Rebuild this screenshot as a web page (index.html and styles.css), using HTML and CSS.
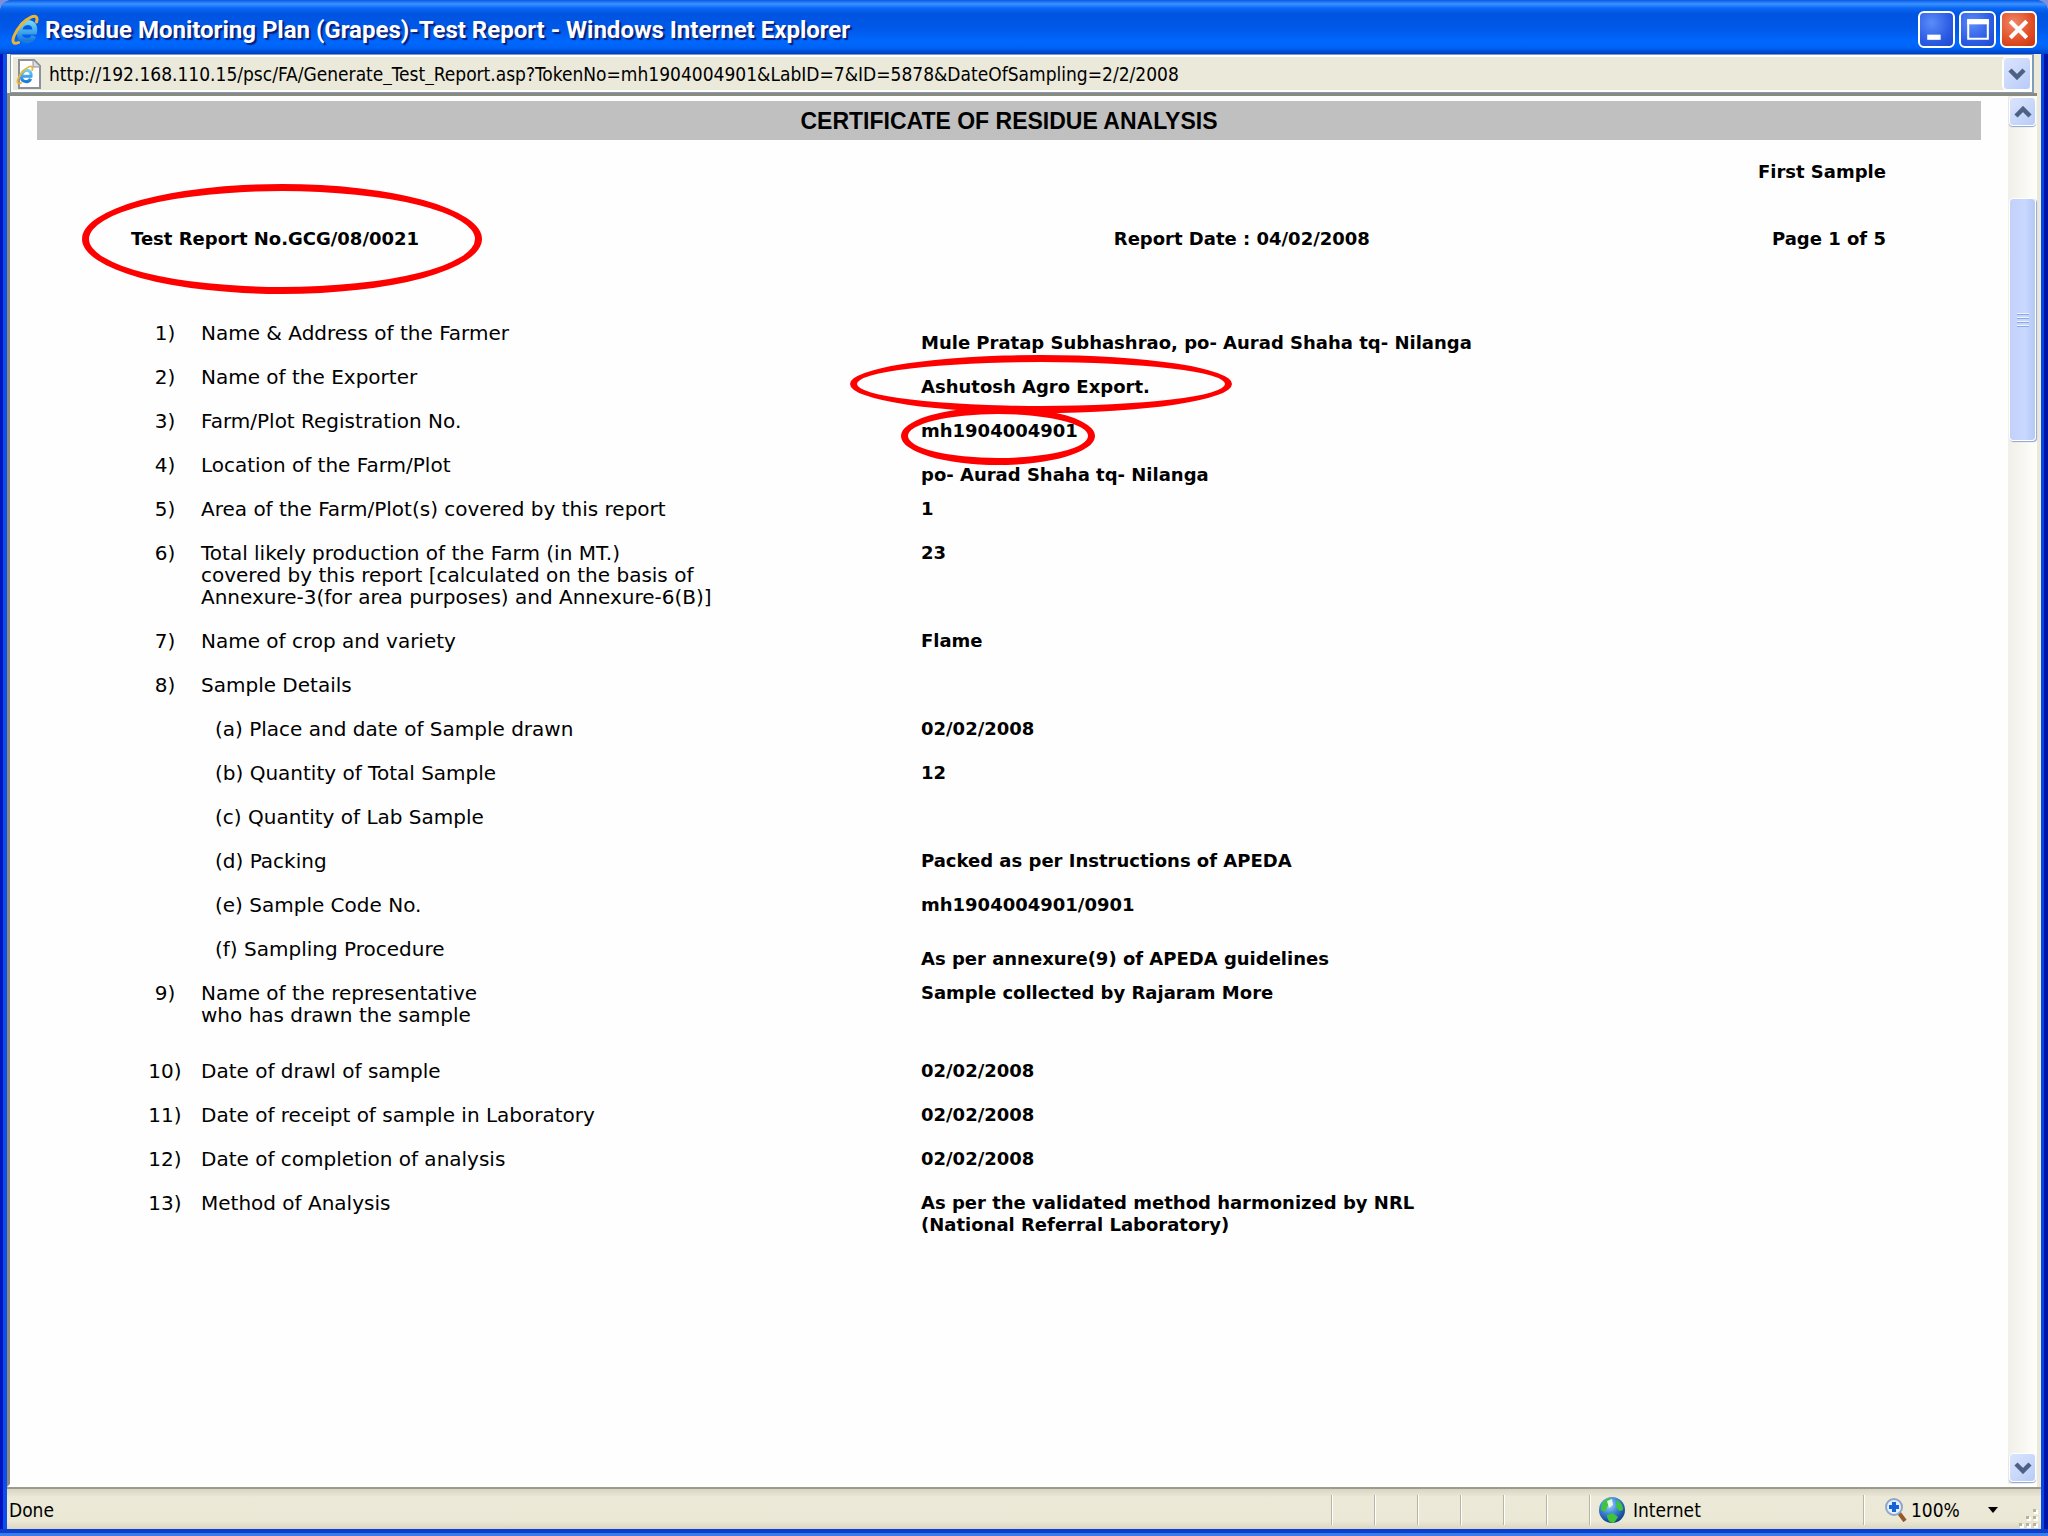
FILE: index.html
```html
<!DOCTYPE html>
<html lang="en">
<head>
    <meta charset="UTF-8">
    <meta name="viewport" content="width=device-width, initial-scale=1.0">
    <title>Residue Monitoring Plan (Grapes)-Test Report</title>
    <link rel="stylesheet" href="styles.css">
</head>
<body>
    <svg width="0" height="0" class="defs" aria-hidden="true">
        <defs>
            <linearGradient id="eBlue" x1="0" y1="0" x2="0" y2="1">
                <stop offset="0" stop-color="#6fd2f8"/>
                <stop offset="1" stop-color="#1c7ad8"/>
            </linearGradient>
            <radialGradient id="sea" cx="0.4" cy="0.3" r="0.7">
                <stop offset="0" stop-color="#a8d4ff"/>
                <stop offset="0.5" stop-color="#3d86d8"/>
                <stop offset="1" stop-color="#123f8c"/>
            </radialGradient>
            <symbol id="ie" viewBox="0 0 28 32">
                <path d="M23 22c-2 4-5 5-8 4.500-5-.7-7-4-6.500-8.500C9 12 12.500 8.500 17 8.500c5 0 7.500 4 6.500 9.500H9.500" fill="none" stroke="url(#eBlue)" stroke-width="5"/>
                <path d="M25.500 8C27 3.500 25 1 20.500 2.800 14 5.500 6 14 3 22c-2 5.500-1 9 4.500 6.500" fill="none" stroke="#e9b43a" stroke-width="3" stroke-linecap="round"/>
            </symbol>
            <symbol id="down" viewBox="0 0 18 12">
                <path d="M2 2l7 7 7-7" fill="none" stroke="#4d6185" stroke-width="4.500"/>
            </symbol>
        </defs>
    </svg>

    <div class="window">
        <header class="titlebar">
            <svg class="logo"><use href="#ie"/></svg>
            <h1>Residue Monitoring Plan (Grapes)-Test Report - Windows Internet Explorer</h1>
            <div class="winButtons">
                <button aria-label="Minimize"><svg viewBox="0 0 32 32"><rect x="7" y="21" width="13" height="5" fill="#fff"/></svg></button>
                <button aria-label="Maximize"><svg viewBox="0 0 32 32"><path d="M7 7h19v18H7z" fill="none" stroke="#fff" stroke-width="2"/><path d="M6 6h21v5H6z" fill="#fff"/></svg></button>
                <button class="close" aria-label="Close"><svg viewBox="0 0 32 32"><path d="M8 8l16 16M24 8L8 24" stroke="#fff" stroke-width="4"/></svg></button>
            </div>
        </header>

        <div class="inner">
            <div class="addressBar">
                <svg class="pageIcon" viewBox="0 0 28 32">
                    <path d="M4 2h15l6 6v22H4z" fill="#fff" stroke="#8e9099" stroke-width="2"/>
                    <path d="M18 2v7h7" fill="#dcdce2" stroke="#8e9099"/>
                    <use href="#ie" x="0" y="7" width="20" height="20"/>
                </svg>
                <input class="url" type="text" aria-label="Address" value="http://192.168.110.15/psc/FA/Generate_Test_Report.asp?TokenNo=mh1904004901&amp;LabID=7&amp;ID=5878&amp;DateOfSampling=2/2/2008">
                <button class="xpButton drop" aria-label="Show address list"><svg><use href="#down"/></svg></button>
            </div>

            <div class="view">
                <main class="report">
                    <h2>CERTIFICATE OF RESIDUE ANALYSIS</h2>
                    <div class="sampleNo">First Sample</div>
                    <div class="reportHead">
                        <span><span class="marked">Test Report No.GCG/08/0021<i class="ring ringReport"></i></span></span>
                        <span>Report Date : 04/02/2008</span>
                        <span>Page 1 of 5</span>
                    </div>
                    <table class="details">
                        <colgroup><col class="colNo"><col class="colLabel"><col></colgroup>
                        <tr><td>1)</td><td>Name &amp; Address of the Farmer</td><td class="low">Mule Pratap Subhashrao, po- Aurad Shaha tq- Nilanga</td></tr>
                        <tr><td>2)</td><td>Name of the Exporter</td><td class="low"><span class="marked">Ashutosh Agro Export.<i class="ring ringExporter"></i></span></td></tr>
                        <tr><td>3)</td><td>Farm/Plot Registration No.</td><td class="low"><span class="marked">mh1904004901<i class="ring ringPlot"></i></span></td></tr>
                        <tr><td>4)</td><td>Location of the Farm/Plot</td><td class="low">po- Aurad Shaha tq- Nilanga</td></tr>
                        <tr><td>5)</td><td>Area of the Farm/Plot(s) covered by this report</td><td>1</td></tr>
                        <tr><td>6)</td><td>Total likely production of the Farm (in MT.)<br>covered by this report [calculated on the basis of<br>Annexure-3(for area purposes) and Annexure-6(B)]</td><td>23</td></tr>
                        <tr><td>7)</td><td>Name of crop and variety</td><td>Flame</td></tr>
                        <tr><td>8)</td><td>Sample Details</td><td></td></tr>
                        <tr class="sub"><td></td><td>(a) Place and date of Sample drawn</td><td>02/02/2008</td></tr>
                        <tr class="sub"><td></td><td>(b) Quantity of Total Sample</td><td>12</td></tr>
                        <tr class="sub"><td></td><td>(c) Quantity of Lab Sample</td><td></td></tr>
                        <tr class="sub"><td></td><td>(d) Packing</td><td>Packed as per Instructions of APEDA</td></tr>
                        <tr class="sub"><td></td><td>(e) Sample Code No.</td><td>mh1904004901/0901</td></tr>
                        <tr class="sub"><td></td><td>(f) Sampling Procedure</td><td class="low">As per annexure(9) of APEDA guidelines</td></tr>
                        <tr class="last"><td>9)</td><td>Name of the representative<br>who has drawn the sample</td><td>Sample collected by Rajaram More</td></tr>
                        <tr><td>10)</td><td>Date of drawl of sample</td><td>02/02/2008</td></tr>
                        <tr><td>11)</td><td>Date of receipt of sample in Laboratory</td><td>02/02/2008</td></tr>
                        <tr><td>12)</td><td>Date of completion of analysis</td><td>02/02/2008</td></tr>
                        <tr><td>13)</td><td>Method of Analysis</td><td>As per the validated method harmonized by NRL<br>(National Referral Laboratory)</td></tr>
                    </table>
                </main>
                <div class="scrollbar">
                    <button class="xpButton arrow up" aria-label="Scroll up"><svg><use href="#down"/></svg></button>
                    <div class="track">
                        <div class="thumb"><i></i><i></i><i></i><i></i></div>
                    </div>
                    <button class="xpButton arrow" aria-label="Scroll down"><svg><use href="#down"/></svg></button>
                </div>
            </div>

            <footer class="statusBar">
                <span class="done">Done</span>
                <span class="pane"></span><span class="pane"></span><span class="pane"></span>
                <span class="pane"></span><span class="pane"></span><span class="pane"></span>
                <span class="zone">
                    <svg class="globe" viewBox="0 0 28 28">
                        <circle cx="14" cy="14" r="13" fill="url(#sea)"/>
                        <path d="M4 8c2-4 5-6 8-6l1 5-4 4-2 5-4-2zM19 4c4 2 6 6 6 10l-4 1-3-5zM9 19l6-2 5 4-4 6c-4 0-7-3-7-8z" fill="#3fc43c"/>
                        <path d="M9 5l5-2 1 6-4 3z" fill="#e8f8e8"/>
                    </svg>
                    Internet
                </span>
                <button class="zoom">
                    <svg class="lens" viewBox="0 0 22 24">
                        <path d="M14 15l6 8" stroke="#96582c" stroke-width="4"/>
                        <circle cx="9" cy="9" r="8" fill="#e4effc" stroke="#8fa6c8" stroke-width="2"/>
                        <path d="M9 4v10M4 9h10" stroke="#1664d8" stroke-width="4"/>
                    </svg>
                    <span>100%</span>
                    <svg class="caret" viewBox="0 0 10 6"><path d="M0 0h10L5 6z"/></svg>
                </button>
                <svg class="grip" viewBox="0 0 20 20">
                    <path d="M15 1h4v4h-4zM8 8h4v4H8zM15 8h4v4h-4zM1 15h4v4H1zM8 15h4v4H8zM15 15h4v4h-4z" fill="#fff"/>
                    <path d="M14 0h3v3h-3zM7 7h3v3H7zM14 7h3v3h-3zM0 14h3v3H0zM7 14h3v3H7zM14 14h3v3h-3z" fill="#b8b49c"/>
                </svg>
            </footer>
        </div>
    </div>
</body>
</html>
```
FILE: styles.css
```css
* {
    box-sizing: border-box;
}
body {
    margin: 0;
    background: #7c8fdc;
    color: #000;
    font-family: "DejaVu Sans Condensed", "DejaVu Sans", sans-serif;
    font-size: 19px;
}
button {
    margin: 0;
    padding: 0;
    font: inherit;
    color: inherit;
    cursor: pointer;
}
.defs {
    position: absolute;
}
.window {
    display: flex;
    flex-direction: column;
    min-height: 100vh;
    padding: 0 7px 7px;
    border-radius: 12px 12px 0 0;
    background:
        linear-gradient(#0a3fd0 0 4px, #3b7ce8 4px) bottom / 100% 7px no-repeat,
        linear-gradient(to right, #0012c0 0 3px, #0b50e8 3px 7px, transparent 7px calc(100% - 7px), #0848e0 calc(100% - 7px) calc(100% - 4px), #0014a8 calc(100% - 4px)) bottom / 100% calc(100% - 54px) no-repeat,
        #0056e8;
}

/* title bar */
.titlebar {
    display: flex;
    align-items: center;
    height: 54px;
    margin: 0 -7px;
    padding: 5px 11px 0;
    border-radius: 12px 12px 0 0;
    background: linear-gradient(#0a58e8 0, #3a94ff 4px, #0a68f4 8px, #0054e0 14px, #0058e8 28px, #0068ff 42px, #0062f4 48px, #0040c4 54px);
    color: #fff;
}
.titlebar h1 {
    flex: 1;
    margin: 0 0 0 6px;
    font: bold 24px/30px Roboto, sans-serif;
    text-shadow: 2px 2px 1px #0a1f78;
}
.logo {
    width: 28px;
    height: 32px;
}
.winButtons {
    display: flex;
    gap: 4px;
}
.winButtons button {
    width: 37px;
    height: 37px;
    border: 2px solid #fff;
    border-radius: 6px;
    background: radial-gradient(circle at 35% 30%, #5c8cf8, #2c5ce4 60%, #1c48cc);
}
.winButtons .close {
    background: radial-gradient(circle at 35% 30%, #f08868, #e04c24 60%, #c43410);
}
.winButtons svg {
    display: block;
    width: 33px;
    height: 33px;
}

.inner {
    flex: 1;
    display: flex;
    flex-direction: column;
    background: #ece9d8;
}

/* address bar */
.addressBar {
    display: flex;
    align-items: center;
    height: 39px;
    margin: 0 7px 0 3px;
    padding: 3px 1px 3px 4px;
    border: 1px solid #7f9db9;
    border-right-width: 2px;
    background: #ebe9d9;
    box-shadow: inset 0 0 0 2px #fff;
}
.pageIcon {
    width: 28px;
    height: 32px;
}
.url {
    flex: 1;
    height: 30px;
    margin: 0 0 0 6px;
    padding: 0;
    border: none;
    background: transparent;
    font: inherit;
    color: #000;
}
.xpButton {
    display: flex;
    align-items: center;
    justify-content: center;
    border: 1px solid #fff;
    border-radius: 4px;
    background: linear-gradient(135deg, #dbe4fd, #b8ccf8);
}
.xpButton svg {
    width: 18px;
    height: 12px;
}
.drop {
    width: 28px;
    height: 33px;
    outline: 1px solid #fff;
}

/* page area */
.view {
    flex: 1;
    display: flex;
    margin: 0 4px 0 0;
    border-top: 3px solid #8c8a7c;
    border-left: 3px solid #8c8a7c;
    border-bottom: 3px solid #fff;
    background: #fefefe;
}
.report {
    flex: 1;
    padding: 5px 27px 0;
    font: 20px/22px "DejaVu Sans", sans-serif;
}
.report h2 {
    margin: 0;
    padding-top: 2px;
    background: #c0c0c0;
    text-align: center;
    font: bold 23px/37px "Liberation Sans", sans-serif;
}
.sampleNo,
.reportHead {
    padding: 0 95px 0 94px;
    font-size: 18px;
    font-weight: bold;
}
.sampleNo {
    margin-top: 21px;
    text-align: right;
}
.reportHead {
    display: grid;
    grid-template-columns: 56% 1fr auto;
    margin: 45px 0 72px;
}
.details {
    width: calc(100% - 102px);
    margin-left: 102px;
    border-collapse: collapse;
    table-layout: fixed;
}
.colNo {
    width: 52px;
}
.colLabel {
    width: 730px;
}
.details td {
    padding: 0 0 22px;
    vertical-align: top;
}
.details td:first-child {
    text-align: center;
}
.details td:nth-child(2) {
    padding-left: 10px;
}
.details td:last-child {
    font-size: 18px;
    font-weight: bold;
}
.details td.low {
    padding: 10px 0 12px;
}
.details .sub td:nth-child(2) {
    padding-left: 24px;
}
.details .last td {
    padding-bottom: 34px;
}

/* red markings */
.marked {
    position: relative;
}
.ring {
    position: absolute;
    border: 7px solid #f00;
    border-radius: 50%;
}
.ringReport {
    left: -49px;
    top: -44px;
    width: 400px;
    height: 110px;
}
.ringExporter {
    left: -71px;
    top: -21px;
    width: 382px;
    height: 58px;
}
.ringPlot {
    left: -20px;
    top: -13px;
    width: 194px;
    height: 58px;
}

/* scrollbar */
.scrollbar {
    display: flex;
    flex-direction: column;
    width: 29px;
    padding: 1px 1px 2px;
    background: linear-gradient(to right, #f0efe8, #fefefb);
}
.arrow {
    width: 27px;
    height: 29px;
    box-shadow: 0 1px 1px #8ea4cc;
}
.up svg {
    transform: rotate(180deg);
}
.track {
    flex: 1;
    padding-top: 72px;
}
.thumb {
    display: flex;
    flex-direction: column;
    align-items: center;
    justify-content: center;
    gap: 2px;
    height: 243px;
    border: 1px solid #fff;
    border-radius: 4px;
    background: linear-gradient(to right, #c4d0fa, #c8d8ff 60%, #b4c8f6);
    box-shadow: 1px 1px 1px #8ea4cc;
}
.thumb i {
    width: 12px;
    height: 2px;
    background: #eef4fe;
    border-bottom: 1px solid #8ca8e4;
}

/* status bar */
.statusBar {
    display: flex;
    align-items: center;
    height: 42px;
    padding-top: 2px;
    border-top: 2px solid #9c9a8c;
    background: linear-gradient(#d8d5c4, #ece9d8 8px, #ebe8d6 32px, #dcd6c0);
}
.done {
    flex: 1;
    padding-left: 2px;
}
.pane,
.zone,
.zoom {
    height: 30px;
    border: 0;
    border-left: 1px solid #b8b5a4;
    box-shadow: inset 1px 0 0 #fff;
}
.pane {
    width: 43px;
}
.zone {
    display: flex;
    align-items: center;
    gap: 7px;
    width: 274px;
    padding-left: 8px;
}
.globe {
    width: 28px;
    height: 28px;
}
.zoom {
    display: flex;
    align-items: center;
    width: 156px;
    padding-left: 21px;
    background: none;
}
.lens {
    width: 22px;
    height: 24px;
    margin-right: 4px;
}
.caret {
    width: 10px;
    height: 6px;
    margin-left: 28px;
}
.grip {
    align-self: flex-end;
    width: 20px;
    height: 20px;
    margin-right: 2px;
}
```
